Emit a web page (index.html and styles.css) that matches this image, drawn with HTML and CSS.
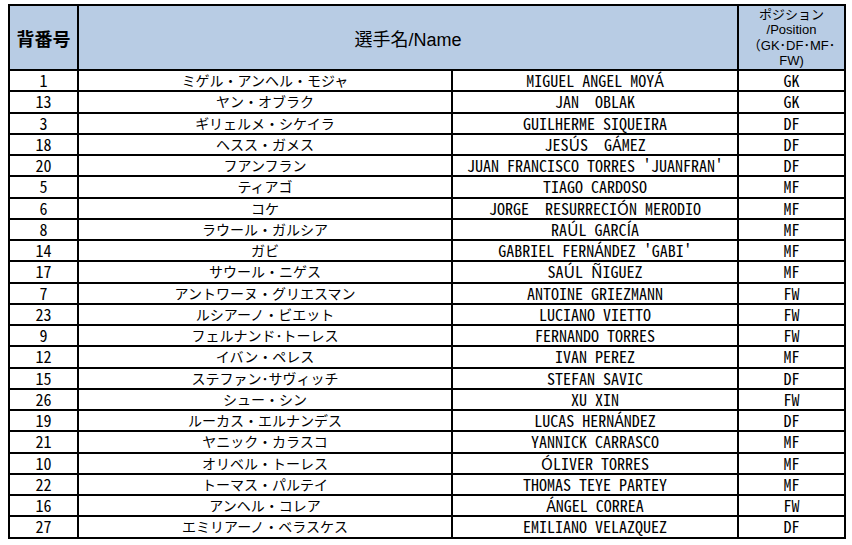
FILE: index.html
```html
<!DOCTYPE html>
<html lang="ja">
<head>
<meta charset="utf-8">
<title>Roster</title>
<link rel="stylesheet" href="styles.css">
</head>
<body>
<table class="roster">
  <colgroup>
    <col class="c-num">
    <col class="c-jp">
    <col class="c-en">
    <col class="c-pos">
  </colgroup>
  <thead>
    <tr class="head">
      <th class="h-num">背番号</th>
      <th class="h-name" colspan="2">選手名/Name</th>
      <th class="h-pos">ポジション<br>/Position<br>（GK･DF･MF･<br>FW)</th>
    </tr>
  </thead>
  <tbody>
    <tr><td class="num">1</td><td class="jp">ミゲル・アンヘル・モジャ</td><td class="en">MIGUEL ANGEL MOYÁ</td><td class="pos">GK</td></tr>
    <tr><td class="num">13</td><td class="jp">ヤン・オブラク</td><td class="en">JAN  OBLAK</td><td class="pos">GK</td></tr>
    <tr><td class="num">3</td><td class="jp">ギリェルメ・シケイラ</td><td class="en">GUILHERME SIQUEIRA</td><td class="pos">DF</td></tr>
    <tr><td class="num">18</td><td class="jp">ヘスス・ガメス</td><td class="en">JESÚS  GÁMEZ</td><td class="pos">DF</td></tr>
    <tr><td class="num">20</td><td class="jp">フアンフラン</td><td class="en">JUAN FRANCISCO TORRES 'JUANFRAN'</td><td class="pos">DF</td></tr>
    <tr><td class="num">5</td><td class="jp">ティアゴ</td><td class="en">TIAGO CARDOSO</td><td class="pos">MF</td></tr>
    <tr><td class="num">6</td><td class="jp">コケ</td><td class="en">JORGE  RESURRECIÓN MERODIO</td><td class="pos">MF</td></tr>
    <tr><td class="num">8</td><td class="jp">ラウール・ガルシア</td><td class="en">RAÚL GARCÍA</td><td class="pos">MF</td></tr>
    <tr><td class="num">14</td><td class="jp">ガビ</td><td class="en">GABRIEL FERNÁNDEZ 'GABI'</td><td class="pos">MF</td></tr>
    <tr><td class="num">17</td><td class="jp">サウール・ニゲス</td><td class="en">SAÚL ÑIGUEZ</td><td class="pos">MF</td></tr>
    <tr><td class="num">7</td><td class="jp">アントワーヌ・グリエスマン</td><td class="en">ANTOINE GRIEZMANN</td><td class="pos">FW</td></tr>
    <tr><td class="num">23</td><td class="jp">ルシアーノ・ビエット</td><td class="en">LUCIANO VIETTO</td><td class="pos">FW</td></tr>
    <tr><td class="num">9</td><td class="jp">フェルナンド･トーレス</td><td class="en">FERNANDO TORRES</td><td class="pos">FW</td></tr>
    <tr><td class="num">12</td><td class="jp">イバン・ペレス</td><td class="en">IVAN PEREZ</td><td class="pos">MF</td></tr>
    <tr><td class="num">15</td><td class="jp">ステファン･サヴィッチ</td><td class="en">STEFAN SAVIC</td><td class="pos">DF</td></tr>
    <tr><td class="num">26</td><td class="jp">シュー・シン</td><td class="en">XU XIN</td><td class="pos">FW</td></tr>
    <tr><td class="num">19</td><td class="jp">ルーカス・エルナンデス</td><td class="en">LUCAS HERNÁNDEZ</td><td class="pos">DF</td></tr>
    <tr><td class="num">21</td><td class="jp">ヤニック・カラスコ</td><td class="en">YANNICK CARRASCO</td><td class="pos">MF</td></tr>
    <tr><td class="num">10</td><td class="jp">オリベル・トーレス</td><td class="en">ÓLIVER TORRES</td><td class="pos">MF</td></tr>
    <tr><td class="num">22</td><td class="jp">トーマス・パルテイ</td><td class="en">THOMAS TEYE PARTEY</td><td class="pos">MF</td></tr>
    <tr><td class="num">16</td><td class="jp">アンヘル・コレア</td><td class="en">ÁNGEL CORREA</td><td class="pos">FW</td></tr>
    <tr><td class="num">27</td><td class="jp">エミリアーノ・ベラスケス</td><td class="en">EMILIANO VELAZQUEZ</td><td class="pos">DF</td></tr>
  </tbody>
</table>
</body>
</html>
```

FILE: styles.css
```css
html, body {
  margin: 0;
  padding: 0;
  background: #ffffff;
}

body {
  padding: 4px 0 0 8px;
  font-family: "Noto Sans Mono CJK JP", "DejaVu Sans Mono", monospace;
  color: #000;
}

.roster {
  border-collapse: collapse;
  table-layout: fixed;
  width: 838px;
  border: 2px solid #000;
}

.c-num { width: 69px; }
.c-jp { width: 374px; }
.c-en { width: 286px; }
.c-pos { width: 107px; }

.roster th,
.roster td {
  border: 2px solid #000;
  padding: 0;
  text-align: center;
  vertical-align: middle;
  white-space: pre;
}

.head {
  height: 65px;
}

.head th {
  background: #b8cce4;
  font-weight: 400;
}

.roster th.h-num {
  font-family: "Noto Sans CJK JP", sans-serif;
  font-size: 18px;
  font-weight: 700;
}

.h-name {
  font-family: "Liberation Sans", "Noto Sans CJK JP", sans-serif;
  font-size: 18px;
}

.h-pos {
  font-family: "Liberation Sans", "Noto Sans CJK JP", sans-serif;
  font-size: 13px;
  line-height: 15.5px;
  white-space: normal;
}

.roster tbody tr {
  height: 21.25px;
}

.roster td {
  line-height: 17px;
  font-size: 16px;
}

.roster td.jp {
  font-family: "Noto Sans CJK JP", sans-serif;
  font-size: 14px;
}
```
